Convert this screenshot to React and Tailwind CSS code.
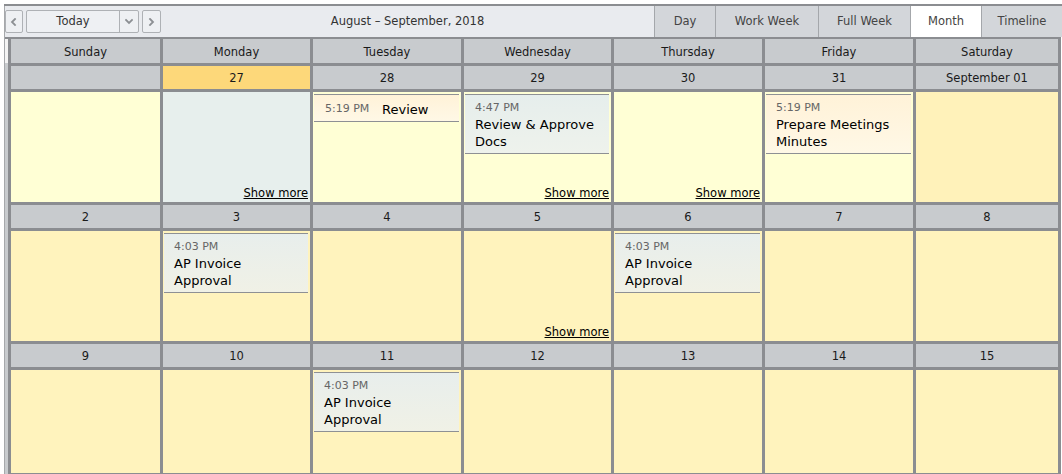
import React from "react";

const WARM = "bg-gradient-to-b from-[#fff2d8] to-[#fff8e6]";
const COOL = "bg-gradient-to-b from-[#e6eeec] to-[#eef2ec]";
const AP = "bg-gradient-to-b from-[#e8eeec] to-[#f0f1e6]";

const weeks = [
  {
    dates: ["", "27", "28", "29", "30", "31", "September 01"],
    today: 1,
    cells: [
      { bg: "bg-[#ffffd5]" },
      { bg: "bg-[#e7efed]", more: true },
      { bg: "bg-[#ffffd5]", ev: { time: "5:19 PM", lines: ["Review"], inline: true, cls: WARM } },
      { bg: "bg-[#ffffd5]", ev: { time: "4:47 PM", lines: ["Review & Approve", "Docs"], cls: COOL }, more: true },
      { bg: "bg-[#ffffd5]", more: true },
      { bg: "bg-[#ffffd5]", ev: { time: "5:19 PM", lines: ["Prepare Meetings", "Minutes"], cls: WARM } },
      { bg: "bg-[#fff2ba]" },
    ],
  },
  {
    dates: ["2", "3", "4", "5", "6", "7", "8"],
    today: -1,
    cells: [
      { bg: "bg-[#fff3bd]" },
      { bg: "bg-[#fff3bd]", ev: { time: "4:03 PM", lines: ["AP Invoice", "Approval"], cls: AP } },
      { bg: "bg-[#fff3bd]" },
      { bg: "bg-[#fff3bd]", more: true },
      { bg: "bg-[#fff3bd]", ev: { time: "4:03 PM", lines: ["AP Invoice", "Approval"], cls: AP } },
      { bg: "bg-[#fff3bd]" },
      { bg: "bg-[#fff3bd]" },
    ],
  },
  {
    dates: ["9", "10", "11", "12", "13", "14", "15"],
    today: -1,
    cells: [
      { bg: "bg-[#fff3bd]" },
      { bg: "bg-[#fff3bd]" },
      { bg: "bg-[#fff3bd]", ev: { time: "4:03 PM", lines: ["AP Invoice", "Approval"], cls: AP } },
      { bg: "bg-[#fff3bd]" },
      { bg: "bg-[#fff3bd]" },
      { bg: "bg-[#fff3bd]" },
      { bg: "bg-[#fff3bd]" },
    ],
  },
];

const days = ["Sunday", "Monday", "Tuesday", "Wednesday", "Thursday", "Friday", "Saturday"];

function Chevron({ dir }) {
  const d =
    dir === "left"
      ? "M5 1 L2 4 L5 7"
      : dir === "right"
      ? "M2 1 L5 4 L2 7"
      : "M1 2 L4 5 L7 2";
  return (
    <svg width="8" height="8" viewBox="0 0 8 8" className="block">
      <path d={d} fill="none" stroke="#8c8f93" strokeWidth="1.8" strokeLinecap="square" />
    </svg>
  );
}

function Event({ ev }) {
  if (ev.inline) {
    return (
      <div className={`ml-[1px] mr-[2px] mt-[2px] border-t border-b border-[#8e9094] ${ev.cls} flex items-start pl-[11px] pt-[6px] pb-[3px]`}>
        <div className="w-[57px] shrink-0 text-[11px] leading-[14px] text-[#666] pt-[1px]">{ev.time}</div>
        <div className="text-[13px] leading-[17px] text-black whitespace-nowrap">{ev.lines[0]}</div>
      </div>
    );
  }
  return (
    <div className={`ml-[1px] mr-[2px] mt-[2px] border-t border-b border-[#8e9094] ${ev.cls} pl-[10px] pt-[6px] pb-[3px]`}>
      <div className="text-[11px] leading-[14px] text-[#666]">{ev.time}</div>
      <div className="pt-[1px]">
        {ev.lines.map((l, i) => (
          <div key={i} className="text-[13px] leading-[17px] text-black whitespace-nowrap">
            {l}
          </div>
        ))}
      </div>
    </div>
  );
}

function Cell({ c }) {
  return (
    <div className={`${c.bg} flex flex-col overflow-hidden`}>
      {c.ev && <Event ev={c.ev} />}
      {c.more && (
        <div className="mt-auto self-end pr-[2px] pb-[2px] text-[11.5px] leading-[14px] text-black underline">
          Show more
        </div>
      )}
    </div>
  );
}

export default function App() {
  const views = [
    { label: "Day", w: "w-[61px]" },
    { label: "Work Week", w: "w-[103px]" },
    { label: "Full Week", w: "w-[92px]" },
    { label: "Month", w: "w-[71px]", active: true },
    { label: "Timeline", w: "flex-1" },
  ];
  return (
    <div className="w-[1062px] h-[474px] overflow-hidden bg-white pt-[4px] pl-[4px] font-['DejaVu_Sans',Verdana,sans-serif] text-[11.5px] text-[#222]">
      <div className="w-[1058px] border-t-2 border-[#8b8d91]">
        {/* toolbar */}
        <div className="flex h-[31px] bg-[#e9ebef] border-l border-[#a6a8ab]">
          <div className="flex items-center gap-[3px]">
            <div className="w-[18px] h-[23px] border border-[#aeb1b5] bg-[#eef0f3] rounded-[2px] flex items-center justify-center">
              <Chevron dir="left" />
            </div>
            <div className="w-[113px] h-[23px] border border-[#aeb1b5] bg-[#eef0f3] rounded-[2px] flex">
              <div className="flex-1 flex items-center justify-center text-[#333] pt-[1px]">Today</div>
              <div className="w-[19px] border-l border-[#aeb1b5] flex items-center justify-center">
                <Chevron dir="down" />
              </div>
            </div>
            <div className="w-[19px] h-[23px] border border-[#aeb1b5] bg-[#eef0f3] rounded-[2px] flex items-center justify-center">
              <Chevron dir="right" />
            </div>
          </div>
          <div className="flex-1 flex items-center justify-center text-[#333] pt-[1px]">August – September, 2018</div>
          <div className="flex w-[408px]">
            {views.map((v) => (
              <div
                key={v.label}
                className={`${v.w} border-l border-[#a4a7ab] flex items-center justify-center text-[#444] pt-[1px] ${
                  v.active ? "bg-white" : "bg-[#d3d6da]"
                }`}
              >
                {v.label}
              </div>
            ))}
          </div>
        </div>

        {/* body */}
        <div className="flex">
          <div className="w-[1px] bg-[#a6a8ab]" />
          <div className="w-[3px] flex flex-col bg-[#c8cbce]">
            <div className="h-[2px] bg-[#8b8d91]" />
            <div className="h-[24px] bg-[#f4f4f4]" />
          </div>
          <div className="w-[1053px] grid grid-cols-[149px_147px_148px_147px_148px_148px_142px] grid-rows-[24px_23px_110px_23px_110px_23px_103px] gap-[3px] bg-[#8b8d91] pt-[2px] px-[3px] pb-[1px]">
            {days.map((d) => (
              <div key={d} className="bg-[#c8cbce] flex items-center justify-center text-[#1a1a1a] pt-[3px]">
                {d}
              </div>
            ))}
            {weeks.map((w, wi) => (
              <React.Fragment key={wi}>
                {w.dates.map((d, i) => (
                  <div
                    key={"d" + i}
                    className={`${i === w.today ? "bg-[#fdd87a]" : "bg-[#c8cbce]"} flex items-center justify-center text-[#1a1a1a] pt-[2px]`}
                  >
                    {d}
                  </div>
                ))}
                {w.cells.map((c, i) => (
                  <Cell key={"c" + i} c={c} />
                ))}
              </React.Fragment>
            ))}
          </div>
        </div>
      </div>
    </div>
  );
}
